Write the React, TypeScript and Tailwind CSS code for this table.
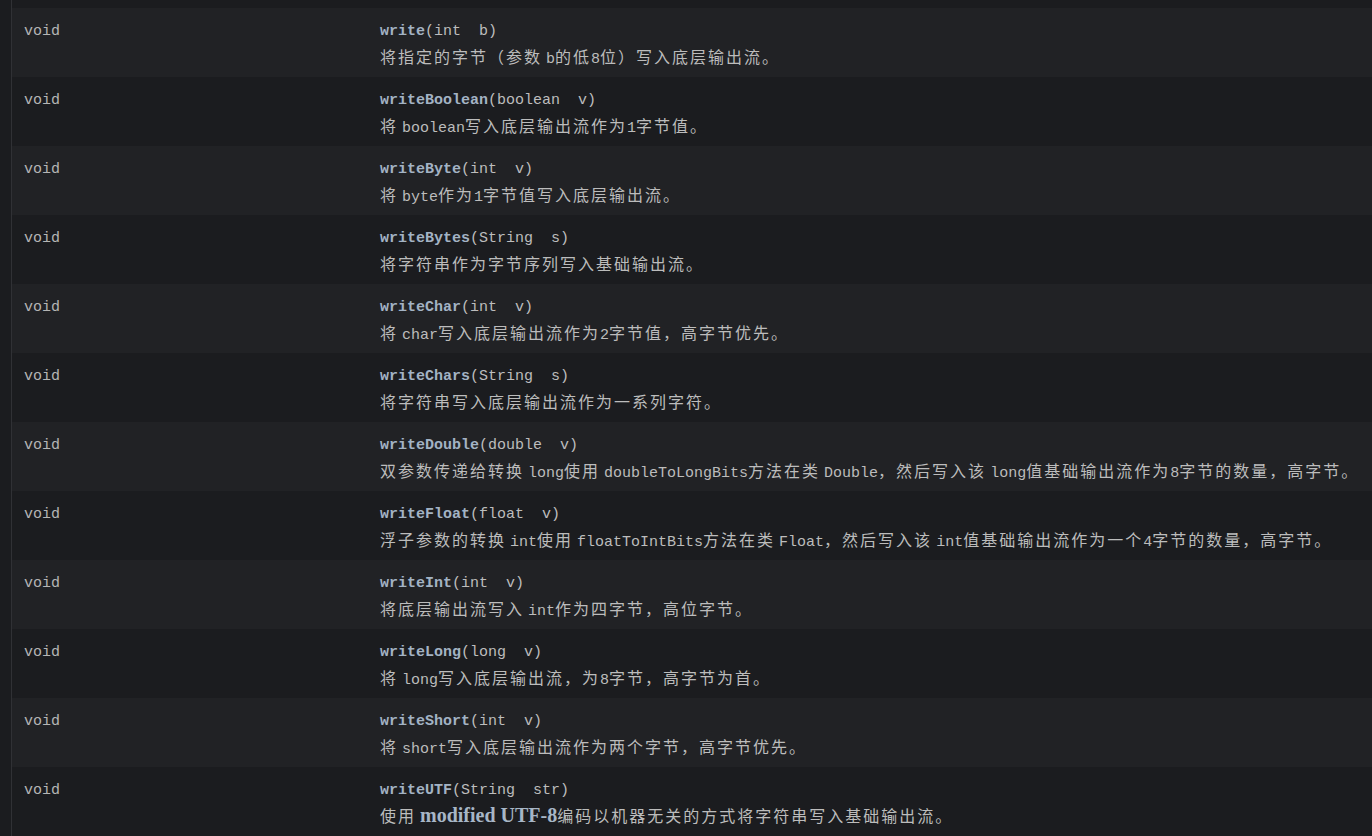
import React from "react";

interface Method {
  name: string;
  args: string;
  desc: React.ReactNode;
}

const RUNS = /([\u3000-\u9fff\uff00-\uffef]+| )/;
const IS_CJK = /[\u3000-\u9fff\uff00-\uffef]/;

// CJK glyphs get a bit more size + tracking so their pitch matches the doc page,
// and the space before inline code is narrower than a mono space
function Txt({ text }: { text: string }) {
  return (
    <>
      {text
        .split(RUNS)
        .filter((p) => p !== "")
        .map((part, i) =>
          part === " " ? (
            <span key={i} className="inline-block w-[4px]" />
          ) : IS_CJK.test(part) ? (
            <span key={i} className="font-['Noto_Sans_CJK_SC',sans-serif] text-[16px] tracking-[2px]">
              {part}
            </span>
          ) : (
            <span key={i}>{part}</span>
          )
        )}
    </>
  );
}

const methods: Method[] = [
  { name: "write", args: "(int  b)", desc: <Txt text="将指定的字节（参数 b的低8位）写入底层输出流。" /> },
  { name: "writeBoolean", args: "(boolean  v)", desc: <Txt text="将 boolean写入底层输出流作为1字节值。" /> },
  { name: "writeByte", args: "(int  v)", desc: <Txt text="将 byte作为1字节值写入底层输出流。" /> },
  { name: "writeBytes", args: "(String  s)", desc: <Txt text="将字符串作为字节序列写入基础输出流。" /> },
  { name: "writeChar", args: "(int  v)", desc: <Txt text="将 char写入底层输出流作为2字节值，高字节优先。" /> },
  { name: "writeChars", args: "(String  s)", desc: <Txt text="将字符串写入底层输出流作为一系列字符。" /> },
  {
    name: "writeDouble",
    args: "(double  v)",
    desc: <Txt text="双参数传递给转换 long使用 doubleToLongBits方法在类 Double，然后写入该 long值基础输出流作为8字节的数量，高字节。" />,
  },
  {
    name: "writeFloat",
    args: "(float  v)",
    desc: <Txt text="浮子参数的转换 int使用 floatToIntBits方法在类 Float，然后写入该 int值基础输出流作为一个4字节的数量，高字节。" />,
  },
  { name: "writeInt", args: "(int  v)", desc: <Txt text="将底层输出流写入 int作为四字节，高位字节。" /> },
  { name: "writeLong", args: "(long  v)", desc: <Txt text="将 long写入底层输出流，为8字节，高字节为首。" /> },
  { name: "writeShort", args: "(int  v)", desc: <Txt text="将 short写入底层输出流作为两个字节，高字节优先。" /> },
  {
    name: "writeUTF",
    args: "(String  str)",
    desc: (
      <>
        <Txt text="使用 " />
        <span className="font-['Liberation_Serif',serif] font-bold text-[20px] text-[#a7b6c6]">modified UTF-8</span>
        <Txt text="编码以机器无关的方式将字符串写入基础输出流。" />
      </>
    ),
  },
];

export default function App() {
  return (
    <div className="min-h-screen bg-[#1b1c1f] pl-[11px] font-['Liberation_Mono','Noto_Sans_CJK_SC',monospace] text-[15px] text-[#bcbcbc]">
      <div className="border-l border-[#303135] pt-2">
        {methods.map((m, i) => (
          <div
            key={m.name}
            className={`flex h-[69px] overflow-hidden px-3 pt-[10px] leading-[27px] ${
              i % 2 === 0 ? "bg-[#212225]" : "bg-[#1b1c1f]"
            }`}
          >
            <div className="w-[356px] shrink-0 text-[#b5b5b5]">void</div>
            <div className="flex-1 min-w-0 whitespace-nowrap">
              <div className="whitespace-pre">
                <span className="font-bold text-[#a3b3c4]">{m.name}</span>
                <span className="text-[#bdbdbd]">{m.args}</span>
              </div>
              <div className="-mt-[2px]">{m.desc}</div>
            </div>
          </div>
        ))}
      </div>
    </div>
  );
}
